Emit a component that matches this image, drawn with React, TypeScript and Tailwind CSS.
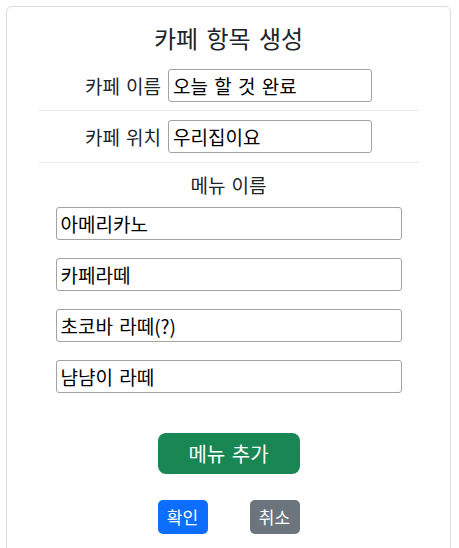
import React from 'react';

const font = { fontFamily: '"Noto Sans CJK KR", "Noto Sans", sans-serif' };

const menus = ['아메리카노', '카페라떼', '초코바 라떼(?)', '냠냠이 라떼'];

const inputCls =
  'h-[33px] border border-[#a3a3a3] rounded-[3px] px-[4px] text-[19px] [word-spacing:2px] text-black bg-white outline-none';

export default function App() {
  return (
    <div className="min-h-[548px] bg-white pt-[6px] px-[6px]" style={font}>
      <div className="w-[445px] border border-[#dedede] rounded-[6px] flex flex-col items-center pt-[15px] pb-[40px] text-[#212529]">
        <h4 className="text-[24px] leading-[32px] [word-spacing:3px]">카페 항목 생성</h4>

        <div className="mt-[15px] flex items-center gap-[7px]">
          <label className="text-[19px] leading-[26px] [word-spacing:2px]">카페 이름</label>
          <input className={`${inputCls} w-[204px]`} defaultValue="오늘 할 것 완료" />
        </div>
        <div className="mt-[8px] mb-[9px] w-[380px] h-px bg-[#e9e9e9]" />

        <div className="flex items-center gap-[7px]">
          <label className="text-[19px] leading-[26px] [word-spacing:2px]">카페 위치</label>
          <input className={`${inputCls} w-[204px]`} defaultValue="우리집이요" />
        </div>
        <div className="mt-[9px] w-[380px] h-px bg-[#e9e9e9]" />

        <div className="mt-[9px] text-[19px] leading-[26px] [word-spacing:2px]">메뉴 이름</div>

        <div className="mt-[9px] flex flex-col gap-[18px]">
          {menus.map((m) => (
            <input key={m} className={`${inputCls} w-[346px]`} defaultValue={m} />
          ))}
        </div>

        <button className="mt-[40px] w-[142px] h-[41px] rounded-[8px] bg-[#198754] text-white text-[20px] [word-spacing:2px]">
          메뉴 추가
        </button>

        <div className="mt-[26px] flex gap-[42px]">
          <button className="w-[50px] h-[33.5px] rounded-[5px] bg-[#0d6efd] text-white text-[17px]">
            확인
          </button>
          <button className="w-[50px] h-[33.5px] rounded-[5px] bg-[#6c757d] text-white text-[17px]">
            취소
          </button>
        </div>
      </div>
    </div>
  );
}
